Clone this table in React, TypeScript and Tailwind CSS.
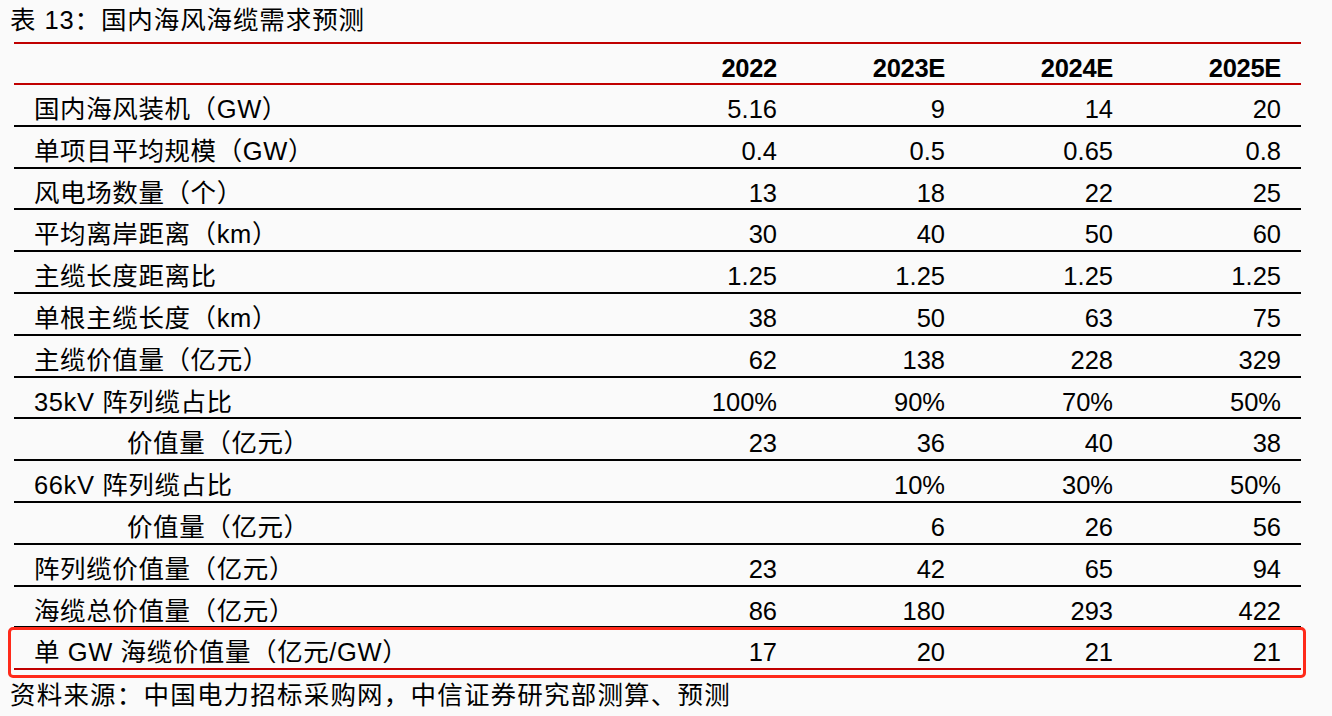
import React from "react";

const FONT = { fontFamily: '"Liberation Sans", Arial, "Noto Sans CJK SC", sans-serif' };

type Row = { label: string; indent?: boolean; values: string[] };

const YEARS = ["2022", "2023E", "2024E", "2025E"];

const ROWS: Row[] = [
  { label: "国内海风装机（GW）", values: ["5.16", "9", "14", "20"] },
  { label: "单项目平均规模（GW）", values: ["0.4", "0.5", "0.65", "0.8"] },
  { label: "风电场数量（个）", values: ["13", "18", "22", "25"] },
  { label: "平均离岸距离（km）", values: ["30", "40", "50", "60"] },
  { label: "主缆长度距离比", values: ["1.25", "1.25", "1.25", "1.25"] },
  { label: "单根主缆长度（km）", values: ["38", "50", "63", "75"] },
  { label: "主缆价值量（亿元）", values: ["62", "138", "228", "329"] },
  { label: "35kV 阵列缆占比", values: ["100%", "90%", "70%", "50%"] },
  { label: "价值量（亿元）", indent: true, values: ["23", "36", "40", "38"] },
  { label: "66kV 阵列缆占比", values: ["", "10%", "30%", "50%"] },
  { label: "价值量（亿元）", indent: true, values: ["", "6", "26", "56"] },
  { label: "阵列缆价值量（亿元）", values: ["23", "42", "65", "94"] },
  { label: "海缆总价值量（亿元）", values: ["86", "180", "293", "422"] },
];

const LAST: Row = { label: "单 GW 海缆价值量（亿元/GW）", values: ["17", "20", "21", "21"] };

const GRID = "grid grid-cols-[615px_168px_168px_168px_168px] items-center pt-[5px]";

export default function App() {
  return (
    <div className="w-[1332px] h-[716px] bg-[#fafafa] text-black overflow-hidden" style={FONT}>
      {/* Title */}
      <div className="h-[42px] pl-[10px] pt-[4px] text-[25.5px] leading-[32px] tracking-[0.9px]">
        表 13：国内海风海缆需求预测
      </div>

      <div className="ml-[14px] w-[1287px] border-t-[2px] border-[#c00000]">
        {/* Header */}
        <div className={`${GRID} h-[41px] border-b-[2px] border-[#c00000] font-bold text-[25.5px]`}>
          <div />
          {YEARS.map((y) => (
            <div key={y} className="text-right pr-[20px] tracking-[-0.3px]">
              {y}
            </div>
          ))}
        </div>

        {ROWS.map((r, i) => (
          <div key={i} className={`${GRID} h-[41.8px] border-b-[2px] border-black text-[25.5px]`}>
            <div className={`${r.indent ? "pl-[113px]" : "pl-[20px]"} tracking-[0.6px]`}>{r.label}</div>
            {r.values.map((v, j) => (
              <div key={j} className="text-right pr-[20px]">
                {v}
              </div>
            ))}
          </div>
        ))}

        {/* Highlighted last row */}
        <div className={`${GRID} relative h-[41.8px] border-b-[2px] border-[#c00000] text-[25.5px]`}>
          <div className="pl-[20px] tracking-[0.6px]">{LAST.label}</div>
          {LAST.values.map((v, j) => (
            <div key={j} className="text-right pr-[20px]">
              {v}
            </div>
          ))}
          <div className="absolute left-[-6px] right-[-5px] top-[-1px] bottom-[-10px] border-[3px] border-[#ff2a1a] rounded-[5px] pointer-events-none" />
        </div>
      </div>

      {/* Source */}
      <div className="pl-[10px] pt-[10px] text-[25.5px] leading-[30px] tracking-[1.2px]">
        资料来源：中国电力招标采购网，中信证券研究部测算、预测
      </div>
    </div>
  );
}
